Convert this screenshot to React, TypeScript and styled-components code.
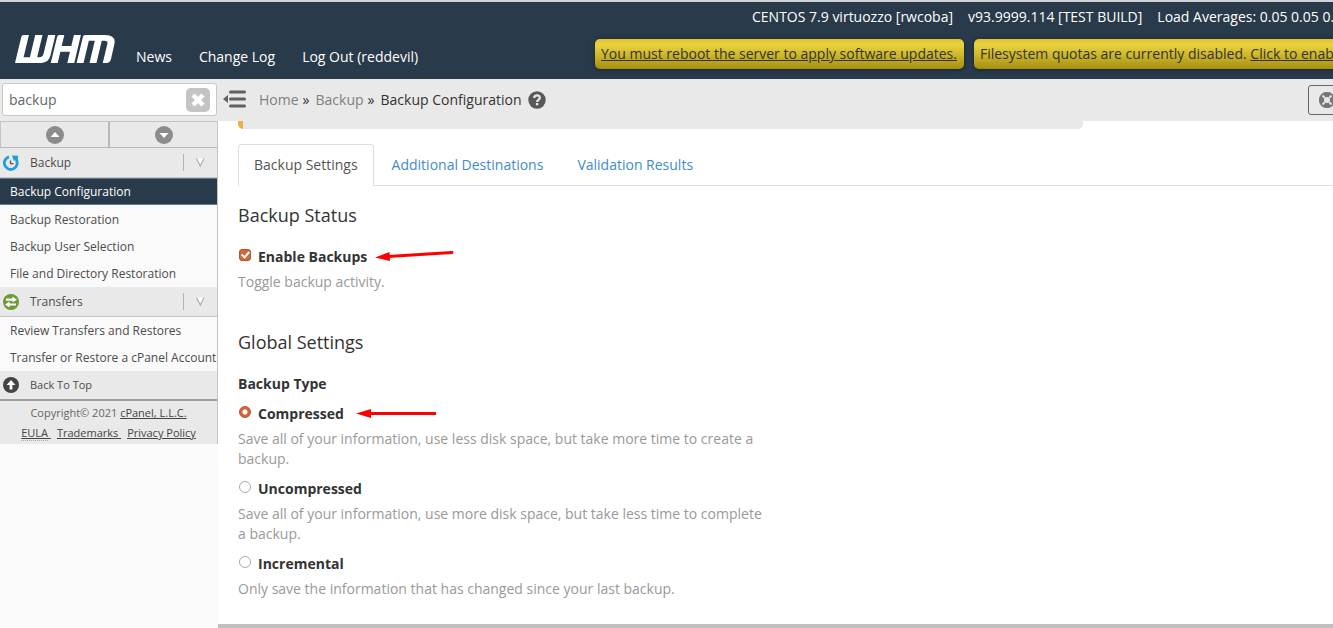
import React from "react";
import styled, { createGlobalStyle, css } from "styled-components";

const GlobalStyle = createGlobalStyle`
  *, *::before, *::after { box-sizing: border-box; }
  body {
    margin: 0;
    background: #fff;
    color: #333;
    font: 14px/20px "Open Sans", "Noto Sans", sans-serif;
  }
  a { color: inherit; text-decoration: none; }
  button { font: inherit; padding: 0; cursor: pointer; }
  h1, h2, h3, p, ul, fieldset, legend { margin: 0; padding: 0; border: 0; }
  ul { list-style: none; }
`;

const Page = styled.div`
  display: flex;
  flex-direction: column;
  min-height: 100vh;
  overflow: hidden;
`;

const Header = styled.header`
  display: flex;
  border-top: 2px solid #d3d4d5;
  background: #293a4a;
  color: #fff;
  height: 79px;
  overflow: hidden;
`;

const Brand = styled.a`
  margin: 33px 0 0 15px;
  svg { display: block; }
`;

const TopNav = styled.nav`
  display: flex;
  gap: 27px;
  width: 459px;
  flex-shrink: 0;
  margin: 45px 0 0 21px;
`;

const ServerInfo = styled.div`
  flex: 1 0 auto;
  white-space: nowrap;
`;

const StatusLine = styled.ul`
  display: flex;
  gap: 15px;
  padding: 5px 0 0 157px;
`;

const Alerts = styled.div`
  display: flex;
  gap: 10px;
  padding-top: 12px;
`;

const Alert = styled.div`
  height: 30px;
  padding: 5px 7px 5px 6px;
  border-radius: 5px;
  background: linear-gradient(#e0c22f, #ead23e 20%, #a5900f);
  box-shadow: 0 1px 5px rgba(0, 0, 0, 0.35);
  color: #333;
  a { text-decoration: underline; }
`;

const Body = styled.div`
  display: flex;
  flex: 1;
`;

const Sidebar = styled.aside`
  width: 218px;
  flex-shrink: 0;
  background: #fafafa;
  color: #4c4c4c;
  font-size: 12px;
`;

const SearchBar = styled.form`
  padding: 4px 1px 5px 2px;
  background: #e9e9e9;
`;

const SearchBox = styled.div`
  display: flex;
  align-items: center;
  height: 33px;
  padding: 0 6px;
  border: 1px solid #c8c8c8;
  border-radius: 3px;
  background: #fff;
`;

const SearchInput = styled.input`
  flex: 1;
  min-width: 0;
  border: 0;
  padding: 0;
  outline: 0;
  background: none;
  color: #666;
  font: inherit;
  font-size: 14px;
`;

const ClearButton = styled.button`
  display: grid;
  place-items: center;
  width: 24px;
  height: 24px;
  border: 0;
  border-radius: 5px;
  background: #c4c4c4;
`;

const SidePanel = styled.div`
  border-right: 1px solid #c4c4c4;
`;

const ArrowRow = styled.div`
  display: grid;
  grid-template-columns: calc(50% - 1px) 1fr;
  height: 27px;
  border-top: 1px solid #c4c4c4;
  border-bottom: 1px solid #b8b8b8;
  border-left: 1px solid #c4c4c4;
  background: #e9e9e9;
`;

const ArrowButton = styled.button`
  display: grid;
  place-items: center;
  border: 0;
  background: none;
  & + & { border-left: 2px solid #b8b8b8; }
`;

const Category = styled.div`
  display: flex;
  align-items: center;
  height: 30px;
  padding-left: 3px;
  border-bottom: 1px solid #c4c4c4;
  background: #e9e9e9;
`;

const CategoryLink = styled.a`
  display: flex;
  align-items: center;
  gap: 11px;
  flex: 1;
`;

const CategoryToggle = styled.button`
  display: grid;
  place-items: center;
  width: 34px;
  height: 17px;
  border: 0;
  border-left: 1px solid #b4b4b4;
  background: none;
`;

const MenuItem = styled.a<{ $active?: boolean }>`
  display: block;
  height: 27px;
  padding: 4px 0 3px 10px;
  white-space: nowrap;
  ${(p) =>
    p.$active &&
    css`
      margin-bottom: 1px;
      padding: 3px 0 2px 10px;
      border: solid #5c7c8c;
      border-width: 1px 0;
      background: #293a4a;
      color: #fff;
    `}
`;

const BackToTop = styled(CategoryLink)`
  height: 30px;
  padding-left: 3px;
  border-bottom: 2px solid #a0a0a0;
  background: #e9e9e9;
  font-size: 11px;
`;

const SideFooter = styled.footer`
  padding: 2px 0 1px;
  background: #e9e9e9;
  color: #666;
  font-size: 11px;
  text-align: center;
  a { color: #444; text-decoration: underline; }
`;

const LegalLinks = styled.div`
  display: flex;
  justify-content: center;
  gap: 6px;
  a { white-space: pre; }
  abbr {
    border-bottom: 1px dotted #aaa;
    text-decoration: none;
  }
`;

const Main = styled.main`
  display: flex;
  flex-direction: column;
  flex: 1;
  min-width: 0;
`;

const Toolbar = styled.div`
  display: flex;
  align-items: center;
  height: 42px;
  padding-left: 5px;
  overflow: hidden;
  background: #e9e9e9;
`;

const IconButton = styled.button`
  display: block;
  border: 0;
  background: none;
  svg { display: block; }
`;

const Crumbs = styled.nav`
  display: flex;
  align-items: center;
  gap: 6px;
  flex: 1;
  margin-left: 12px;
  a { color: #808080; }
  span { margin-left: -2px; }
`;

const SupportButton = styled.button`
  display: flex;
  align-items: center;
  height: 30px;
  width: 40px;
  flex-shrink: 0;
  margin-right: -15px;
  padding-left: 10px;
  border: 1px solid #666;
  border-radius: 3px;
  background: none;
`;

const Content = styled.div`
  padding: 0 0 25px 20px;
`;

const Notice = styled.div`
  height: 8px;
  max-width: 845px;
  border-left: 5px solid #f0ad4e;
  border-radius: 0 0 5px 5px;
  background: #e9e9e9;
`;

const Tabs = styled.div`
  display: flex;
  gap: 2px;
  height: 42px;
  margin-top: 15px;
  border-bottom: 1px solid #ddd;
`;

const Tab = styled.button<{ $active?: boolean }>`
  height: 42px;
  padding: 0 15px;
  border: 1px solid transparent;
  border-radius: 4px 4px 0 0;
  background: none;
  color: #428bca;
  ${(p) =>
    p.$active &&
    css`
      border-color: #ddd #ddd #fff;
      background: #fff;
      color: #555;
    `}
`;

const SectionTitle = styled.h2<{ $first?: boolean }>`
  margin: ${(p) => (p.$first ? 19 : 40)}px 0 22px;
  font-size: 18px;
  font-weight: 400;
`;

const GroupTitle = styled.legend`
  margin-bottom: 10px;
  font-weight: 700;
`;

const Option = styled.div`
  & + & { margin-top: 10px; }
`;

const OptionRow = styled.div`
  display: flex;
  height: 20px;
  label {
    margin: 0 8px 0 7px;
    font-weight: 700;
  }
`;

const controlBase = css`
  appearance: none;
  width: 12px;
  height: 12px;
  margin: 2px 0 0 1px;
  border: 1px solid #aaa;
  background: #fff;
`;

const Checkbox = styled.input`
  ${controlBase}
  border-radius: 3px;
  &:checked {
    display: grid;
    justify-items: center;
    border-color: #b4532a;
    background: #d2673a;
  }
  &:checked::after {
    content: "";
    width: 5px;
    height: 8px;
    border: solid #fff;
    border-width: 0 2px 2px 0;
    transform: rotate(42deg);
  }
`;

const Radio = styled.input`
  ${controlBase}
  border-radius: 50%;
  &:checked {
    border-color: #b4532a;
    background: radial-gradient(circle, #fff 2px, #d2673a 3px);
  }
`;

const Help = styled.p`
  max-width: 530px;
  margin-top: 5px;
  color: #999;
`;

const BottomBar = styled.div`
  height: 4px;
  margin-top: auto;
  background: #c0c0c0;
`;

const WhmLogo = () => (
  <svg width="100" height="28" viewBox="0 0 302 84" role="img" aria-label="WHM">
    <g fill="#fff">
      <path d="M26 0 H42 L26 67 H45 L61 0 H83 L67 67 H73 Q83 67 86 57 L100 0 H122 L107 62 Q101 84 80 84 H0 L19 6 Q20 0 26 0 Z" />
      <path d="M134 0 H149 L141 33 H170 L178 0 H199 L179 84 H158 L166 50 H137 L129 84 H108 L127 6 Q128 0 134 0 Z" />
      <path d="M213 0 H272 Q306 0 300 28 L290 72 Q287 84 276 84 H265 L279 26 Q281 17 270 17 H262 L246 84 H225 L241 17 H223 L207 84 H186 L205 6 Q206 0 213 0 Z" />
    </g>
  </svg>
);

const DiscArrow = ({ down }: { down?: boolean }) => (
  <svg width="18" height="18" viewBox="0 0 18 18" aria-hidden="true">
    <circle cx="9" cy="9" r="9" fill="#8c8c8c" />
    <path d={down ? "M4.5 7 H13.5 L9 12 Z" : "M4.5 11 H13.5 L9 6 Z"} fill="#fff" />
  </svg>
);

const BackupIcon = () => (
  <svg width="16" height="16" viewBox="0 0 16 16" aria-hidden="true">
    <path d="M6 1.900 A6.400 6.400 0 1 0 13.300 4.800" fill="none" stroke="#1f9fe0" strokeWidth="2.800" />
    <path d="M9 .5 L15.200 .8 L14.600 6.500 L12.800 5 L10.800 5.800 Z" fill="#1f9fe0" />
    <path d="M7.500 5.500 V8.700 H10.500" fill="none" stroke="#555" strokeWidth="1.300" />
  </svg>
);

const TransferIcon = () => (
  <svg width="16" height="16" viewBox="0 0 16 16" aria-hidden="true">
    <circle cx="8" cy="8" r="8" fill="#6d9a35" />
    <path d="M3 4.600 H9.500 V2.400 L14 5.700 L9.500 8.200 V6.800 H3 Z M13 9.400 H6.500 V7.600 L2 10.600 L6.500 13.600 V11.600 H13 Z" fill="#fff" />
  </svg>
);

const TopIcon = () => (
  <svg width="16" height="16" viewBox="0 0 16 16" aria-hidden="true">
    <circle cx="8" cy="8" r="8" fill="#444" />
    <path d="M8 3 L12.500 8 H9.400 V12.500 H6.600 V8 H3.500 Z" fill="#fff" />
  </svg>
);

const Chevron = () => (
  <svg width="9" height="9" viewBox="0 0 9 9" aria-hidden="true">
    <path d="M0.500 0.500 H8.500 L4.500 8.500 Z" fill="#fff" />
    <path d="M0.500 0.500 L4.300 8 L8 0.500" fill="none" stroke="#b0b0b0" strokeWidth="1.300" />
  </svg>
);

const CollapseIcon = () => (
  <svg width="24" height="20" viewBox="0 0 24 20" aria-hidden="true">
    <path d="M0 9 L5 5 V13 Z" fill="#606060" />
    <path d="M7.500 2 H21.500 M7.500 9 H21.500 M7.500 16 H21.500" stroke="#606060" strokeWidth="3" strokeLinecap="round" />
  </svg>
);

const HelpIcon = () => (
  <svg width="18" height="18" viewBox="0 0 18 18" aria-hidden="true">
    <circle cx="9" cy="9" r="8.700" fill="#585858" />
    <path d="M6.200 7 Q6.300 4.300 9 4.300 Q11.800 4.300 11.800 6.800 Q11.800 8.200 10.300 9 Q9.100 9.600 9.100 10.900" fill="none" stroke="#e9e9e9" strokeWidth="2.200" />
    <rect x="7.900" y="12" width="2.400" height="2.300" fill="#e9e9e9" />
  </svg>
);

const LifeRing = () => (
  <svg width="16" height="16" viewBox="0 0 16 16" aria-hidden="true">
    <circle cx="8" cy="8" r="5.500" fill="none" stroke="#777" strokeWidth="5" />
    <circle cx="8" cy="8" r="7.300" fill="none" stroke="#777" strokeWidth="1.300" />
    <path d="M3.500 3.500 L5.800 5.800 M12.500 3.500 L10.200 5.800 M3.500 12.500 L5.800 10.200 M12.500 12.500 L10.200 10.200" stroke="#e9e9e9" strokeWidth="1.800" />
  </svg>
);

const RedArrow = ({ tilted }: { tilted?: boolean }) => (
  <svg width="84" height="20" viewBox="0 0 84 20" aria-hidden="true">
    {tilted ? (
      <g fill="red">
        <path d="M0 10.500 L14.500 5 L15 14 Z" />
        <path d="M13 9.500 L77 5.500" stroke="red" strokeWidth="3" strokeLinecap="round" />
      </g>
    ) : (
      <g fill="red">
        <path d="M4 9.500 L19 5 V14 Z" />
        <path d="M17 9.500 H85" stroke="red" strokeWidth="3" strokeLinecap="round" />
      </g>
    )}
  </svg>
);

const backupLinks = [
  "Backup Configuration",
  "Backup Restoration",
  "Backup User Selection",
  "File and Directory Restoration",
];
const transferLinks = ["Review Transfers and Restores", "Transfer or Restore a cPanel Account"];

const backupTypes = [
  {
    id: "compressed",
    label: "Compressed",
    help: "Save all of your information, use less disk space, but take more time to create a backup.",
  },
  {
    id: "uncompressed",
    label: "Uncompressed",
    help: "Save all of your information, use more disk space, but take less time to complete a backup.",
  },
  {
    id: "incremental",
    label: "Incremental",
    help: "Only save the information that has changed since your last backup.",
  },
];

export default function App() {
  return (
    <Page id="top">
      <GlobalStyle />
      <Header>
        <Brand href="#"><WhmLogo /></Brand>
        <TopNav>
          <a href="#">News</a>
          <a href="#">Change Log</a>
          <a href="#">Log Out (reddevil)</a>
        </TopNav>
        <ServerInfo>
          <StatusLine>
            <li>CENTOS 7.9 virtuozzo [rwcoba]</li>
            <li>v93.9999.114 [TEST BUILD]</li>
            <li>Load Averages: 0.05 0.05 0.05</li>
          </StatusLine>
          <Alerts>
            <Alert><a href="#">You must reboot the server to apply software updates.</a></Alert>
            <Alert>Filesystem quotas are currently disabled. <a href="#">Click to enable</a></Alert>
          </Alerts>
        </ServerInfo>
      </Header>
      <Body>
        <Sidebar>
          <SearchBar>
            <SearchBox>
              <SearchInput type="text" aria-label="Search" defaultValue="backup" />
              <ClearButton type="button" aria-label="Clear search">
                <svg width="14" height="14" viewBox="0 0 14 14" aria-hidden="true">
                  <path d="M2 2 L12 12 M12 2 L2 12" stroke="#fff" strokeWidth="4.500" />
                </svg>
              </ClearButton>
            </SearchBox>
          </SearchBar>
          <SidePanel>
            <ArrowRow>
              <ArrowButton aria-label="Collapse all"><DiscArrow /></ArrowButton>
              <ArrowButton aria-label="Expand all"><DiscArrow down /></ArrowButton>
            </ArrowRow>
            <Category>
              <CategoryLink href="#"><BackupIcon />Backup</CategoryLink>
              <CategoryToggle aria-label="Toggle Backup"><Chevron /></CategoryToggle>
            </Category>
            <ul>
              {backupLinks.map((text, i) => (
                <li key={text}><MenuItem href="#" $active={i === 0}>{text}</MenuItem></li>
              ))}
            </ul>
            <Category>
              <CategoryLink href="#"><TransferIcon />Transfers</CategoryLink>
              <CategoryToggle aria-label="Toggle Transfers"><Chevron /></CategoryToggle>
            </Category>
            <ul>
              {transferLinks.map((text) => (
                <li key={text}><MenuItem href="#">{text}</MenuItem></li>
              ))}
            </ul>
            <BackToTop href="#top"><TopIcon />Back To Top</BackToTop>
            <SideFooter>
              <p>Copyright© 2021 <a href="#">cPanel, L.L.C.</a></p>
              <LegalLinks>
                <a href="#"><abbr title="End User License Agreement">EULA</abbr> </a>
                <a href="#">Trademarks </a>
                <a href="#">Privacy Policy</a>
              </LegalLinks>
            </SideFooter>
          </SidePanel>
        </Sidebar>
        <Main>
          <Toolbar>
            <IconButton aria-label="Collapse sidebar"><CollapseIcon /></IconButton>
            <Crumbs aria-label="Breadcrumb">
              <a href="#">Home</a>
              <span>»</span>
              <a href="#">Backup</a>
              <span>»</span>
              Backup Configuration
              <IconButton aria-label="Help"><HelpIcon /></IconButton>
            </Crumbs>
            <SupportButton aria-label="Support"><LifeRing /></SupportButton>
          </Toolbar>
          <Content>
            <Notice />
            <Tabs role="tablist">
              <Tab role="tab" aria-selected $active>Backup Settings</Tab>
              <Tab role="tab">Additional Destinations</Tab>
              <Tab role="tab">Validation Results</Tab>
            </Tabs>
            <SectionTitle $first>Backup Status</SectionTitle>
            <Option>
              <OptionRow>
                <Checkbox type="checkbox" id="enable" defaultChecked />
                <label htmlFor="enable">Enable Backups</label>
                <RedArrow tilted />
              </OptionRow>
              <Help>Toggle backup activity.</Help>
            </Option>
            <SectionTitle>Global Settings</SectionTitle>
            <fieldset>
              <GroupTitle>Backup Type</GroupTitle>
              {backupTypes.map((type, i) => (
                <Option key={type.id}>
                  <OptionRow>
                    <Radio type="radio" name="type" id={type.id} defaultChecked={i === 0} />
                    <label htmlFor={type.id}>{type.label}</label>
                    {i === 0 && <RedArrow />}
                  </OptionRow>
                  <Help>{type.help}</Help>
                </Option>
              ))}
            </fieldset>
          </Content>
          <BottomBar />
        </Main>
      </Body>
    </Page>
  );
}
